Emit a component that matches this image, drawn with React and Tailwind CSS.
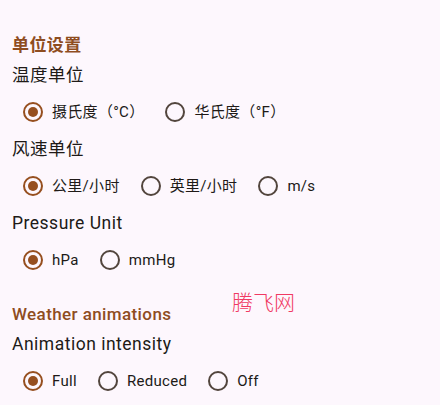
import React from "react";

const FONT = { fontFamily: "Roboto, 'Noto Sans CJK SC', sans-serif" };

function Radio({ checked }) {
  return (
    <span
      className={
        "flex h-[20px] w-[20px] shrink-0 items-center justify-center rounded-full border-2 " +
        (checked ? "border-[#964f1f]" : "border-[#52453d]")
      }
    >
      {checked && <span className="h-[10px] w-[10px] rounded-full bg-[#964f1f]" />}
    </span>
  );
}

function Option({ label, checked }) {
  return (
    <div className="mr-[21px] flex items-center gap-[9px]">
      <Radio checked={checked} />
      <span className="text-[15px] leading-[20px] tracking-[0.3px] text-[#201a17]">{label}</span>
    </div>
  );
}

function RadioRow({ options, selected }) {
  return (
    <div className="flex h-[48px] items-center pl-[11px]">
      {options.map((o, i) => (
        <Option key={o} label={o} checked={i === selected} />
      ))}
    </div>
  );
}

function SectionTitle({ children, heavy }) {
  return (
    <div
      className={
        "text-[17px] leading-[24px] tracking-[0.4px] text-[#8f4d1f] " +
        (heavy ? "font-bold" : "font-medium")
      }
    >
      {children}
    </div>
  );
}

function FieldLabel({ children }) {
  return (
    <div className="text-[17.5px] leading-[26px] tracking-[0.5px] text-[#201a17]">{children}</div>
  );
}

export default function App() {
  return (
    <div
      className="relative h-[405px] w-[440px] overflow-hidden bg-[#fdf7fd] px-[12px] pt-[33px]"
      style={FONT}
    >
      <SectionTitle heavy>单位设置</SectionTitle>
      <div className="mt-[5px]">
        <FieldLabel>温度单位</FieldLabel>
      </div>
      <RadioRow options={["摄氏度（°C）", "华氏度（°F）"]} selected={0} />
      <FieldLabel>风速单位</FieldLabel>
      <RadioRow options={["公里/小时", "英里/小时", "m/s"]} selected={0} />
      <FieldLabel>Pressure Unit</FieldLabel>
      <RadioRow options={["hPa", "mmHg"]} selected={0} />

      <div className="mt-[18px]">
        <SectionTitle>Weather animations</SectionTitle>
      </div>
      <div className="mt-[5px]">
        <FieldLabel>Animation intensity</FieldLabel>
      </div>
      <RadioRow options={["Full", "Reduced", "Off"]} selected={0} />

      <div className="absolute left-[232px] top-[289px] text-[21px] font-light leading-[28px] text-[#f03a63]">
        腾飞网
      </div>
    </div>
  );
}
